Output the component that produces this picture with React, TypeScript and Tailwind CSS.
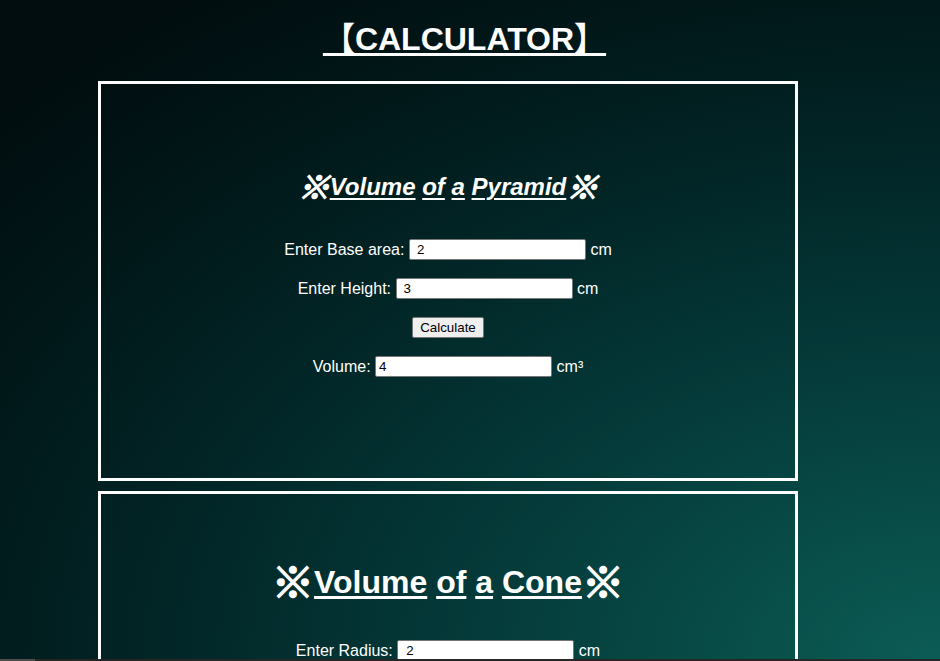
import React from "react";

function Row({ label, value, unit, pad = "pl-[7px]" }: { label: string; value: string; unit: string; pad?: string }) {
  return (
    <div className="flex h-[21px] items-center justify-center gap-[4.5px] text-[16px] leading-[18px]">
      <span>{label}</span>
      <input
        readOnly
        value={value}
        className={`h-[21px] w-[177px] rounded-[2px] border border-[#767676] bg-white ${pad} font-['Liberation_Sans',Arial,sans-serif] text-[13.33px] text-black outline-none`}
      />
      <span>{unit}</span>
    </div>
  );
}

function CalcButton() {
  return (
    <div className="flex h-[21px] items-center justify-center">
      <button className="h-[21px] w-[72px] rounded-[2px] border border-[#767676] bg-[#efefef] text-[13.33px] leading-[15px] text-black">
        Calculate
      </button>
    </div>
  );
}

function Mark() {
  return (
    <span className="inline-block font-['Noto_Sans_CJK_JP',sans-serif] text-[1.32em] font-black leading-none [-webkit-text-stroke:1.6px_white] align-[-0.12em]">
      ※
    </span>
  );
}

export default function App() {
  return (
    <div className="min-h-screen bg-fixed bg-[radial-gradient(ellipse_135%_125%_at_100%_100%,#0c5c55_0%,#074844_22%,#043636_42%,#022526_62%,#011718_82%,#010d0f_100%)] pb-[40px] font-['Liberation_Sans','Noto_Sans_CJK_JP',Arial,sans-serif] text-white">
      <div className="pt-[21px]">
        <h1 className="h-[37px] w-[929px] text-center text-[32px] font-bold leading-[37px]">
          <span className="underline decoration-[3px] underline-offset-[3px]">【CALCULATOR】</span>
        </h1>
      </div>

      <div className="ml-[98px] mt-[23px] h-[400px] w-[700px] border-[3px] border-white pt-[88px]">
        <h2 className="flex h-[28px] items-center justify-center text-[24px] font-bold italic leading-[28px]">
          <span className="whitespace-pre">
            <Mark />
            <u className="decoration-2 underline-offset-[3px]">Volume</u>{" "}
            <u className="decoration-2 underline-offset-[3px]">of</u>{" "}
            <u className="decoration-2 underline-offset-[3px]">a</u>{" "}
            <u className="decoration-2 underline-offset-[3px]">Pyramid</u>
            <Mark />
          </span>
        </h2>
        <div className="mt-[39px] flex flex-col gap-[18px]">
          <Row label="Enter Base area:" value="2" unit="cm" />
          <Row label="Enter Height:" value="3" unit="cm" />
          <CalcButton />
          <Row label="Volume:" value="4" unit="cm³" pad="pl-[3px]" />
        </div>
      </div>

      <div className="ml-[98px] mt-[10px] h-[400px] w-[700px] border-[3px] border-white pt-[68px]">
        <h2 className="flex h-[37px] items-center justify-center text-[32px] font-bold leading-[37px]">
          <span className="whitespace-pre">
            <Mark />
            <u className="decoration-[3px] underline-offset-[3px]">Volume</u>{" "}
            <u className="decoration-[3px] underline-offset-[3px]">of</u>{" "}
            <u className="decoration-[3px] underline-offset-[3px]">a</u>{" "}
            <u className="decoration-[3px] underline-offset-[3px]">Cone</u>
            <Mark />
          </span>
        </h2>
        <div className="mt-[41px] flex flex-col gap-[18px]">
          <Row label="Enter Radius:" value="2" unit="cm" pad="pl-[8px]" />
          <Row label="Enter Height:" value="3" unit="cm" />
          <CalcButton />
          <Row label="Volume:" value="12.57" unit="cm³" pad="pl-[3px]" />
        </div>
      </div>

      <div className="fixed bottom-0 left-0 right-0 flex h-[2px] bg-[#262626]">
        <div className="h-[2px] w-[35px] bg-[#4d4d4d]" />
      </div>
    </div>
  );
}
